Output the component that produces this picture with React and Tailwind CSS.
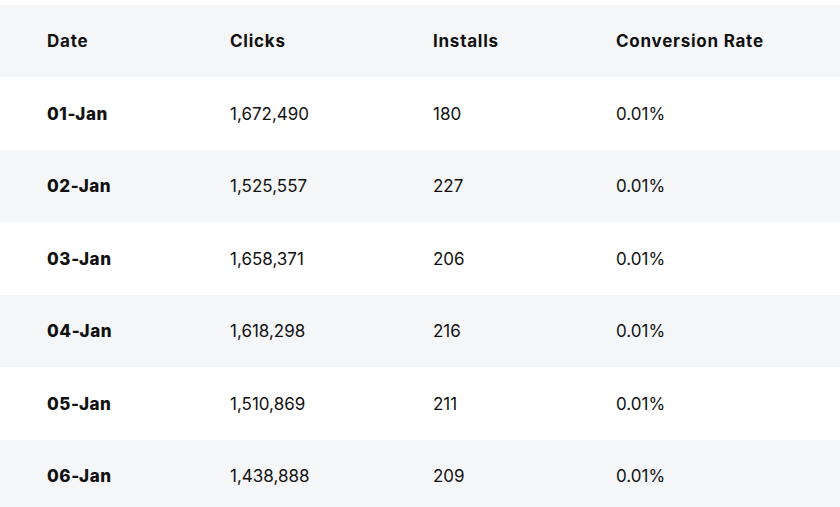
const rows = [
  { date: "01-Jan", clicks: "1,672,490", installs: "180", rate: "0.01%" },
  { date: "02-Jan", clicks: "1,525,557", installs: "227", rate: "0.01%" },
  { date: "03-Jan", clicks: "1,658,371", installs: "206", rate: "0.01%" },
  { date: "04-Jan", clicks: "1,618,298", installs: "216", rate: "0.01%" },
  { date: "05-Jan", clicks: "1,510,869", installs: "211", rate: "0.01%" },
  { date: "06-Jan", clicks: "1,438,888", installs: "209", rate: "0.01%" },
];

const cols = "grid grid-cols-[183px_203px_183px_1fr] pl-[47px] pt-[2px] items-center";

export default function App() {
  return (
    <div className="w-[840px] h-[507px] overflow-hidden bg-white pt-[5px] text-[17px] text-[#111] font-['Inter',sans-serif]">
      <div className={`${cols} h-[72px] bg-[#f5f6f8] font-bold tracking-[0.75px]`}>
        <div>Date</div>
        <div>Clicks</div>
        <div>Installs</div>
        <div>Conversion Rate</div>
      </div>
      {rows.map((r, i) => (
        <div key={r.date} className={`${cols} h-[72.5px] ${i % 2 ? "bg-[#f5f6f8]" : "bg-white"}`}>
          <div className="font-extrabold tracking-[0.6px]">{r.date}</div>
          <div>{r.clicks}</div>
          <div>{r.installs}</div>
          <div>{r.rate}</div>
        </div>
      ))}
    </div>
  );
}
